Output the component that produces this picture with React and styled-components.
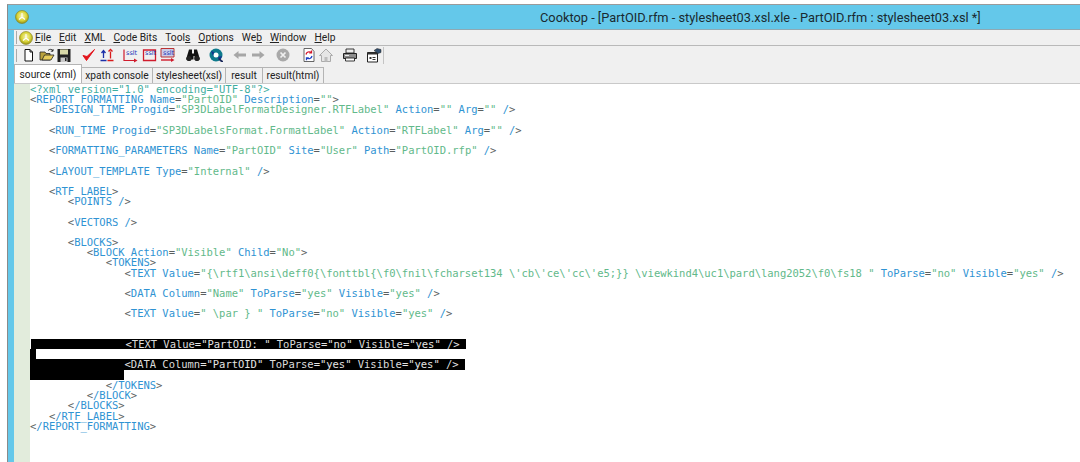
import React from "react";
import styled, { createGlobalStyle } from "styled-components";

const GlobalStyle = createGlobalStyle`
	html, body {
		margin: 0;
		padding: 0;
		background: #fff;
		overflow: hidden;
	}
`;

const Page = styled.div`
	width: 1080px;
	height: 462px;
	padding: 4px 0 0 7px;
	box-sizing: border-box;
	background: #fff;
`;

const Window = styled.div`
	height: 458px;
	display: flex;
	flex-direction: column;
	background: #64c8ea;
	border-top: 1px solid #9a9a9a;
	border-left: 1px solid #8a8a8a;
	box-sizing: border-box;
`;

const TitleBar = styled.div`
	height: 24px;
	flex: none;
	display: flex;
	align-items: center;
	padding-left: 7px;
	border-bottom: 1px solid #8fa9b3;
`;

const Title = styled.div`
	margin-left: 511px;
	font-family: Roboto, "Noto Sans", sans-serif;
	font-size: 12.8px;
	color: #1a2a30;
	white-space: nowrap;
`;

const Client = styled.div`
	flex: 1;
	margin-left: 6px;
	display: flex;
	flex-direction: column;
	min-height: 0;
	background: #fff;
`;

const Chrome = styled.div`
	flex: none;
	background: #f0f0f0;
	border-bottom: 1px solid #c9c9c9;
	font-family: Roboto, "Noto Sans", sans-serif;
	color: #222;
`;

const MenuBar = styled.div`
	height: 15px;
	display: flex;
	align-items: center;
	border-bottom: 1px solid #b9b9b9;
	font-size: 10.25px;
`;

const Grip = styled.div`
	width: 1px;
	height: 13px;
	margin: 0 2px;
	background: #aaa;
	flex: none;
`;

const MenuItem = styled.span`
	margin-left: ${(props) => props.$ml || 8}px;
	white-space: nowrap;
`;

const ToolBar = styled.div`
	height: 18px;
	display: flex;
	align-items: center;
`;

const ToolSep = styled.div`
	width: 1px;
	height: 17px;
	margin-left: 1px;
	background: #c4c4c4;
	flex: none;
`;

const ToolButton = styled.div`
	width: 16px;
	height: 16px;
	flex: none;
	margin-left: ${(props) => props.$ml || 0}px;
	display: flex;
	align-items: center;
	justify-content: center;
`;

const TabStrip = styled.div`
	height: 19px;
	display: flex;
	align-items: flex-end;
`;

const Tab = styled.div`
	height: ${(props) => (props.$active ? 19 : 16)}px;
	width: ${(props) => props.$w}px;
	box-sizing: border-box;
	flex: none;
	display: flex;
	align-items: center;
	justify-content: center;
	font-size: 10.2px;
	white-space: nowrap;
	background: ${(props) => (props.$active ? "#fff" : "#f0f0f0")};
	border: 1px solid #b4b4b4;
	border-left: ${(props) => (props.$active ? "1px solid #b4b4b4" : "none")};
	border-bottom: none;
`;

const Editor = styled.div`
	flex: 1;
	display: flex;
	min-height: 0;
	overflow: hidden;
`;

const Gutter = styled.div`
	width: 16px;
	flex: none;
	background: #e2ecdc;
`;

const Code = styled.div`
	flex: 1;
	font-family: "DejaVu Sans Mono", monospace;
	font-size: 10.5px;
	letter-spacing: -0.02px;
	line-height: 10.21px;
`;

const Line = styled.div`
	height: 10.21px;
	white-space: pre;
`;

const Selected = styled.span`
	display: inline-block;
	height: 10.21px;
	margin-left: ${(props) => props.$ml || 0}px;
	background: #000;
	vertical-align: top;
`;

const Bracket = styled.span`
	color: ${(props) => (props.$sel ? "#e6e6e6" : "#5a5f5f")};
`;

const Name = styled.span`
	color: ${(props) => (props.$sel ? "#dcdcdc" : "#2f93d3")};
`;

const Value = styled.span`
	color: ${(props) => (props.$sel ? "#e4e4e4" : "#62b98a")};
`;

const Pi = styled.span`
	color: #3fae9f;
`;

const lines = [
	`<?xml version="1.0" encoding="UTF-8"?>`,
	`<REPORT_FORMATTING Name="PartOID" Description="">`,
	`   <DESIGN_TIME Progid="SP3DLabelFormatDesigner.RTFLabel" Action="" Arg="" />`,
	``,
	`   <RUN_TIME Progid="SP3DLabelsFormat.FormatLabel" Action="RTFLabel" Arg="" />`,
	``,
	`   <FORMATTING_PARAMETERS Name="PartOID" Site="User" Path="PartOID.rfp" />`,
	``,
	`   <LAYOUT_TEMPLATE Type="Internal" />`,
	``,
	`   <RTF_LABEL>`,
	`      <POINTS />`,
	``,
	`      <VECTORS />`,
	``,
	`      <BLOCKS>`,
	`         <BLOCK Action="Visible" Child="No">`,
	`            <TOKENS>`,
	`               <TEXT Value="{\\rtf1\\ansi\\deff0{\\fonttbl{\\f0\\fnil\\fcharset134 \\'cb\\'ce\\'cc\\'e5;}} \\viewkind4\\uc1\\pard\\lang2052\\f0\\fs18 " ToParse="no" Visible="yes" />`,
	``,
	`               <DATA Column="Name" ToParse="yes" Visible="yes" />`,
	``,
	`               <TEXT Value=" \\par } " ToParse="no" Visible="yes" />`,
	``,
	``,
	{ sel: `               <TEXT Value="PartOID: " ToParse="no" Visible="yes" /> `, ml: 1 },
	{ gap: 6 },
	{ sel: `               <DATA Column="PartOID" ToParse="yes" Visible="yes" /> ` },
	{ gap: 94 },
	`            </TOKENS>`,
	`         </BLOCK>`,
	`      </BLOCKS>`,
	`   </RTF_LABEL>`,
	`</REPORT_FORMATTING>`,
];

// splits one xml line into coloured runs
function colorize(text, sel) {
	if (text.trim().startsWith("<?")) return <Pi>{text}</Pi>;
	return text.split(/("[^"]*"|<\/|\/>|<|>)/).map((part, i) => {
		if (part === "") return null;
		if (part === "</")
			return (
				<React.Fragment key={i}>
					<Bracket $sel={sel}>&lt;</Bracket>
					<Name $sel={sel}>/</Name>
				</React.Fragment>
			);
		if (part === "/>")
			return (
				<React.Fragment key={i}>
					<Name $sel={sel}>/</Name>
					<Bracket $sel={sel}>&gt;</Bracket>
				</React.Fragment>
			);
		if (part === "<" || part === ">")
			return (
				<Bracket key={i} $sel={sel}>
					{part}
				</Bracket>
			);
		if (part.startsWith('"'))
			return (
				<Value key={i} $sel={sel}>
					{part}
				</Value>
			);
		if (part.endsWith("=")) {
			return (
				<React.Fragment key={i}>
					<Name $sel={sel}>{part.slice(0, -1)}</Name>
					<Bracket $sel={sel}>=</Bracket>
				</React.Fragment>
			);
		}
		return (
			<Name key={i} $sel={sel}>
				{part}
			</Name>
		);
	});
}

function AppLogo({ size = 14 }) {
	return (
		<svg width={size} height={size} viewBox="0 0 14 14" style={{ flex: "none" }}>
			<defs>
				<radialGradient id="lg" cx="50%" cy="42%" r="60%">
					<stop offset="0" stopColor="#f8f6b0" />
					<stop offset="0.6" stopColor="#d8d338" />
					<stop offset="1" stopColor="#8f8a12" />
				</radialGradient>
			</defs>
			<circle cx="7" cy="7" r="6.5" fill="url(#lg)" stroke="#86821a" strokeWidth="0.6" />
			<path d="M7 3v3.5M7 7L4 9.5M7 7l3 2.5" stroke="#fff" strokeWidth="1.1" fill="none" />
		</svg>
	);
}

const icons = {
	newDoc: (
		<path d="M4 2.5h5l2.5 2.5v9h-7.500z M9 2.500v2.500h2.500" fill="#fff" stroke="#111" strokeWidth="1" />
	),
	open: (
		<>
			<path d="M1 5h5l1 1.5h4V13H1z" fill="#b9a13c" stroke="#222" strokeWidth="0.8" />
			<path d="M3 13l2.5-5H15l-3 5z" fill="#e7cd5c" stroke="#222" strokeWidth="0.8" />
			<path d="M9 3.5C10.5 1.8 13 2 14 4M14 2v2.2h-2.2" fill="none" stroke="#222" strokeWidth="0.9" />
		</>
	),
	save: (
		<>
			<path d="M1.5 2h13v13h-13z" fill="#222" />
			<path d="M4 2.5h8v5H4z" fill="#d8d8a8" />
			<path d="M4.5 10.5h7V15h-7z" fill="#c9c9c9" />
			<path d="M9 11h1.5v3H9z" fill="#222" />
		</>
	),
	check: <path d="M2 8.5l3.5 5L13.5 2.5 6 9.5z" fill="#e3141b" stroke="#e3141b" strokeWidth="1" />,
	sort: (
		<>
			<path d="M4.5 4v7M2.5 6l2-2.5 2 2.500M1.500 13.500h6" fill="none" stroke="#1c2fa8" strokeWidth="1.300" />
			<path d="M11.500 4.500v7M9.500 4.500l2-2 2 2M8.500 13.500h6" fill="none" stroke="#d81b1b" strokeWidth="1.300" />
		</>
	),
	xslt1: (
		<>
			<path d="M1 2.500v11h12" fill="none" stroke="#d01b2c" strokeWidth="1.200" />
			<path d="M11 11.500l3.500 2-3.500 2z" fill="#d01b2c" />
			<text x="3" y="8" fontFamily="DejaVu Sans" fontSize="6.500" fill="#2437b8">sslt</text>
		</>
	),
	xslt2: (
		<>
			<path d="M1.500 3h12v10.500h-12z" fill="none" stroke="#d01b2c" strokeWidth="1.300" />
			<text x="3" y="8" fontFamily="DejaVu Sans" fontSize="6.500" fill="#2437b8">sslt</text>
		</>
	),
	xslt3: (
		<>
			<path d="M1 1.500h13v8.500H1z" fill="#c9cde8" stroke="#b33" strokeWidth="1" />
			<path d="M1 13h11" stroke="#d01b2c" strokeWidth="1.400" />
			<path d="M11 11l3.500 2-3.500 2z" fill="#d01b2c" />
			<text x="3" y="7.500" fontFamily="DejaVu Sans" fontSize="6.500" fill="#2437b8">sslt</text>
		</>
	),
	binoculars: (
		<>
			<path d="M4 2.500h3v4h2v-4h3l3 10h-5.500V9h-1v3.500H1z" fill="#111" />
			<circle cx="4" cy="11.500" r="2.600" fill="#222" />
			<circle cx="12" cy="11.500" r="2.600" fill="#222" />
		</>
	),
	globe: (
		<>
			<circle cx="8" cy="8" r="6.500" fill="#0e7a8c" />
			<circle cx="8" cy="8" r="2.500" fill="#fff" />
			<path d="M3 4l3 1-1 4zM10 10l4-1-2 5z" fill="#15348f" />
			<path d="M11 11l4 3v1h-2l-3-3z" fill="#1d2a5c" />
		</>
	),
	back: <path d="M1.500 8l5-4v2.600h7.500v2.800H6.500V12z" fill="#a6a6a6" />,
	forward: <path d="M14.500 8l-5-4v2.600H2v2.800h7.500V12z" fill="#a6a6a6" />,
	stop: (
		<>
			<circle cx="8" cy="8" r="6.500" fill="#a9a9a9" />
			<path d="M5.500 5.500l5 5M10.500 5.500l-5 5" stroke="#f0f0f0" strokeWidth="1.700" />
		</>
	),
	refresh: (
		<>
			<path d="M3 1.500h7.500l2.500 3v10H3z" fill="#fff" stroke="#555" strokeWidth="0.900" />
			<path d="M5 7.500C5.500 5 8 4 10.500 5.500M10.500 3.500v2.300H8.200" fill="none" stroke="#d3172b" strokeWidth="1.300" />
			<path d="M11 9c-.5 2.500-3 3.500-5.500 2M5.500 13.200V11h2.300" fill="none" stroke="#1c3fc4" strokeWidth="1.300" />
		</>
	),
	home: (
		<>
			<path d="M8 2L1.500 8.500H3.500V14.500H12.500V8.500H14.500z" fill="#e6e6e6" stroke="#ababab" strokeWidth="1" />
			<path d="M6.500 10h3v4.500h-3z" fill="#bdbdbd" />
		</>
	),
	print: (
		<>
			<path d="M4 2h8v4H4z" fill="#eee" stroke="#222" strokeWidth="0.900" />
			<path d="M1.500 6.500h13v5h-13z" fill="#8e8e8e" stroke="#222" strokeWidth="1" />
			<path d="M3.500 11h9v3h-9z" fill="#fff" stroke="#222" strokeWidth="0.900" />
			<path d="M3 8.500h4" stroke="#eee" strokeWidth="1" />
		</>
	),
	props: (
		<>
			<path d="M1.500 5.500h10v9.500h-10z" fill="#fff" stroke="#222" strokeWidth="1" />
			<path d="M1.500 5.500h10v2h-10z" fill="#333" />
			<path d="M3.500 10h2v2h-2zM6.500 10h3v1h-3zM6.500 12h3v1h-3z" fill="#333" />
			<path d="M8 3.500l3-2 4 1v3l-3 1z" fill="#33506f" stroke="#222" strokeWidth="0.500" />
		</>
	),
};

const tools = [
	["newDoc", 2], ["open", 2], ["save", 1], ["check", 9], ["sort", 2],
	["xslt1", 8], ["xslt2", 3], ["xslt3", 2], ["binoculars", 9], ["globe", 7],
	["back", 8], ["forward", 2], ["stop", 9], ["refresh", 10], ["home", 1],
	["print", 8], ["props", 8],
];

const tabs = [
	["source (xml)", 68, true],
	["xpath console", 71],
	["stylesheet(xsl)", 73],
	["result", 37],
	["result(html)", 61],
];

function Menu({ label, u, ml }) {
	const i = label.indexOf(u);
	return (
		<MenuItem $ml={ml}>
			{label.slice(0, i)}
			<u>{u}</u>
			{label.slice(i + 1)}
		</MenuItem>
	);
}

export default function App() {
	return (
		<Page>
			<GlobalStyle />
			<Window>
				<TitleBar>
					<AppLogo />
					<Title>Cooktop - [PartOID.rfm - stylesheet03.xsl.xle - PartOID.rfm : stylesheet03.xsl *]</Title>
				</TitleBar>
				<Client>
					<Chrome>
						<MenuBar>
							<Grip />
							<AppLogo />
							<Menu label="File" u="F" ml={2} />
							<Menu label="Edit" u="E" />
							<Menu label="XML" u="X" />
							<Menu label="Code Bits" u="C" />
							<Menu label="Tools" u="s" />
							<Menu label="Options" u="O" />
							<Menu label="Web" u="b" />
							<Menu label="Window" u="W" />
							<Menu label="Help" u="H" />
						</MenuBar>
						<ToolBar>
							<Grip />
							{tools.map(([name, ml]) => (
								<ToolButton key={name} $ml={ml}>
									<svg width="16" height="16" viewBox="0 0 16 16">
										{icons[name]}
									</svg>
								</ToolButton>
							))}
							<ToolSep />
						</ToolBar>
						<TabStrip>
							{tabs.map(([label, w, active]) => (
								<Tab key={label} $w={w} $active={active}>
									{label}
								</Tab>
							))}
						</TabStrip>
					</Chrome>
					<Editor>
						<Gutter />
						<Code>
							{lines.map((line, i) => {
								if (typeof line === "string")
									return <Line key={i}>{colorize(line, false)}</Line>;
								if (line.gap)
									return (
										<Line key={i}>
											<Selected style={{ width: line.gap }} />
										</Line>
									);
								return (
									<Line key={i}>
										<Selected $ml={line.ml}>{colorize(line.sel, true)}</Selected>
									</Line>
								);
							})}
						</Code>
					</Editor>
				</Client>
			</Window>
		</Page>
	);
}
